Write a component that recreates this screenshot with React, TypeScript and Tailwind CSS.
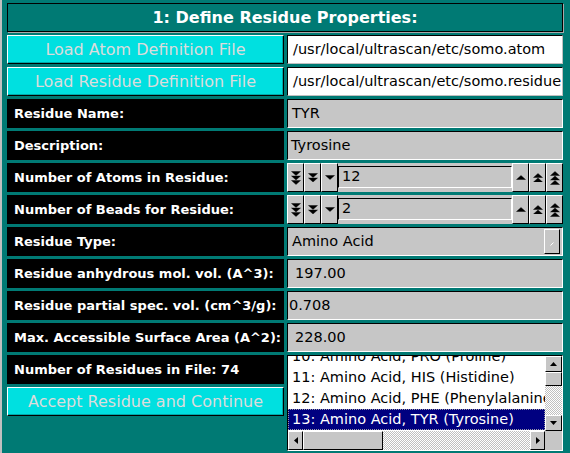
import React from "react";

const raised =
  "bg-[#c6c6c6] border border-t-white border-l-white border-r-black border-b-black";
const sunkenGray =
  "bg-[#c6c6c6] border border-t-black border-l-black border-r-white border-b-white";
const checker =
  "bg-[repeating-conic-gradient(#c0c0c0_0_25%,#ffffff_0_50%)] bg-[length:2px_2px]";

function Arrows({ n, dir }: { n: number; dir: "up" | "down" }) {
  const h = n * 4 + (n - 1) * 0.5 + 1;
  return (
    <svg width="10" height={h} viewBox={`0 0 10 ${h}`}>
      {Array.from({ length: n }).map((_, i) => {
        const y = i * 4.5 + 0.5;
        const pts =
          dir === "down"
            ? `0.5,${y} 9.5,${y} 5,${y + 4}`
            : `5,${y} 9.5,${y + 4} 0.5,${y + 4}`;
        return <polygon key={i} points={pts} fill="black" stroke="black" strokeWidth="0.4" />;
      })}
    </svg>
  );
}

function Tri({ dir }: { dir: "up" | "down" | "left" | "right" }) {
  const pts = {
    up: "3.5,0 7,4 0,4",
    down: "0,0 7,0 3.5,4",
    left: "4,0 4,7 0,3.5",
    right: "0,0 4,3.5 0,7",
  }[dir];
  const w = dir === "up" || dir === "down" ? 7 : 4;
  const h = dir === "up" || dir === "down" ? 4 : 7;
  return (
    <svg width={w} height={h} viewBox={`0 0 ${w} ${h}`}>
      <polygon points={pts} fill="black" />
    </svg>
  );
}

function Label({ children }: { children: React.ReactNode }) {
  return (
    <div className="bg-black text-white font-bold text-[13px] pl-[7px] flex items-center whitespace-nowrap">
      {children}
    </div>
  );
}

function CyanButton({ children }: { children: React.ReactNode }) {
  return (
    <div className="bg-[#00e0e0] border border-t-white border-l-white border-r-black border-b-black shadow-[inset_-1px_-1px_0_#00a8a8] text-[#dcdcdc] text-[16px] flex items-center justify-center whitespace-nowrap">
      {children}
    </div>
  );
}

function Field({ value, pad = "pl-[4px]" }: { value: string; pad?: string }) {
  return (
    <div className={`${sunkenGray} ${pad} text-[14.5px] text-black flex items-center`}>
      {value}
    </div>
  );
}

function Spin({ value }: { value: string }) {
  return (
    <div className="bg-[#c6c6c6] flex">
      {[3, 2, 1].map((n) => (
        <div key={"d" + n} className={`${raised} w-[17px] flex items-center justify-center`}>
          <Arrows n={n} dir="down" />
        </div>
      ))}
      <div className={`${sunkenGray} flex-1 mt-[3px] mb-[4px] pl-[3px] text-[14.5px] flex items-center`}>
        {value}
      </div>
      {[1, 2, 3].map((n) => (
        <div key={"u" + n} className={`${raised} w-[17px] flex items-center justify-center`}>
          <Arrows n={n} dir="up" />
        </div>
      ))}
    </div>
  );
}

export default function App() {
  const items = [
    "10: Amino Acid, PRO (Proline)",
    "11: Amino Acid, HIS (Histidine)",
    "12: Amino Acid, PHE (Phenylalanine)",
    "13: Amino Acid, TYR (Tyrosine)",
    "14: Amino Acid, TRP (Tryptophan)",
  ];

  return (
    <div className="w-[570px] h-[453px] overflow-hidden bg-[#007a74] border-l-2 border-[#c0c0c0] pl-[5px] pt-[3px] font-['DejaVu_Sans',sans-serif]">
      <div className="grid grid-cols-[277px_276px] gap-[3px] auto-rows-[29px]">
        <div className="col-span-2 border border-black shadow-[1px_1px_0_#a8a8a8] text-white font-bold text-[16px] flex items-center justify-center">
          1: Define Residue Properties:
        </div>

        <CyanButton>Load Atom Definition File</CyanButton>
        <div className="bg-white border border-t-black border-l-black border-r-[#c0c0c0] border-b-[#c0c0c0] pl-[5px] text-[14.5px] flex items-center whitespace-nowrap overflow-hidden">
          /usr/local/ultrascan/etc/somo.atom
        </div>

        <CyanButton>Load Residue Definition File</CyanButton>
        <div className="bg-white border border-t-black border-l-black border-r-[#c0c0c0] border-b-[#c0c0c0] pl-[5px] text-[14.5px] flex items-center whitespace-nowrap overflow-hidden">
          /usr/local/ultrascan/etc/somo.residue
        </div>

        <Label>Residue Name:</Label>
        <Field value="TYR" />

        <Label>Description:</Label>
        <Field value="Tyrosine" pad="pl-[3px]" />

        <Label>Number of Atoms in Residue:</Label>
        <Spin value="12" />

        <Label>Number of Beads for Residue:</Label>
        <Spin value="2" />

        <Label>Residue Type:</Label>
        <div className={`${sunkenGray} pl-[4px] pr-[2px] text-[14.5px] flex items-center`}>
          <span className="flex-1">Amino Acid</span>
          <div className={`${raised} w-[16px] h-[25px] flex items-end justify-center pb-[7px]`}>
            <svg width="4" height="4" viewBox="0 0 4 4">
              <line x1="0.5" y1="3.5" x2="3.5" y2="0.5" stroke="white" strokeWidth="1" />
            </svg>
          </div>
        </div>

        <Label>Residue anhydrous mol. vol. (A^3):</Label>
        <Field value="197.00" pad="pl-[7px]" />

        <Label>Residue partial spec. vol. (cm^3/g):</Label>
        <Field value="0.708" pad="pl-[1px]" />

        <Label>Max. Accessible Surface Area (A^2):</Label>
        <Field value="228.00" pad="pl-[7px]" />

        <Label>Number of Residues in File: 74</Label>
        <div className="row-span-2 self-start h-[96px] bg-white border border-t-black border-l-black border-r-white border-b-white flex flex-col">
          <div className="flex h-[75px]">
            <div className="flex-1 overflow-hidden">
              <div className="mt-[-10px]">
                {items.map((t, i) => (
                  <div
                    key={t}
                    className={`h-[21px] leading-[21px] text-[14.5px] pl-[4px] whitespace-nowrap ${
                      i === 3
                        ? "bg-[#000080] text-white outline-1 outline-dotted outline-[#9a9aa8] -outline-offset-1"
                        : "text-black"
                    }`}
                  >
                    {t}
                  </div>
                ))}
              </div>
            </div>
            <div className="w-[17px] flex flex-col">
              <div className={`${raised} h-[16px] flex items-center justify-center`}>
                <Tri dir="up" />
              </div>
              <div className={`${raised} h-[14px]`} />
              <div className={`flex-1 ${checker}`} />
              <div className={`${raised} h-[16px] flex items-center justify-center`}>
                <Tri dir="down" />
              </div>
            </div>
          </div>
          <div className="flex h-[19px]">
            <div className={`${raised} w-[15px] flex items-center justify-center`}>
              <Tri dir="left" />
            </div>
            <div className={`${raised} w-[80px]`} />
            <div className={`flex-1 ${checker}`} />
            <div className={`${raised} w-[15px] flex items-center justify-center`}>
              <Tri dir="right" />
            </div>
            <div className="w-[17px] bg-[#c6c6c6]" />
          </div>
        </div>

        <CyanButton>Accept Residue and Continue</CyanButton>
      </div>
    </div>
  );
}
